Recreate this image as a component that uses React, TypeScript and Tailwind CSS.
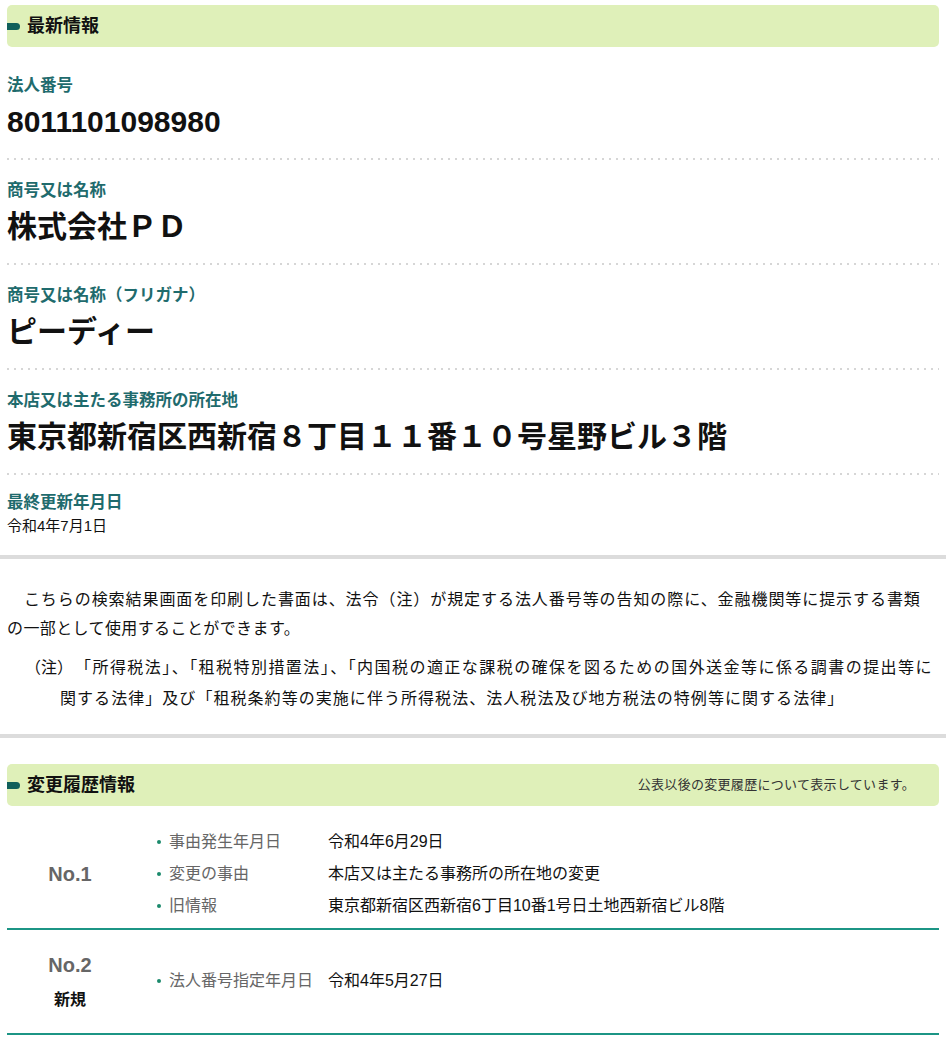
import React from "react";

const JP = "font-['Liberation_Sans','Noto_Sans_CJK_JP',sans-serif]";

function SectionHeader({ title, note }: { title: string; note?: string }) {
  return (
    <div className="flex h-[42px] items-center rounded-[5px] bg-[#dff0b9]">
      <span className="h-[7px] w-[13px] rounded-l-[2px] rounded-r-full bg-[#11605b]" />
      <h2 className="ml-[7px] text-[18px] font-bold leading-none text-[#111]">{title}</h2>
      {note && <span className="ml-auto mr-[24px] text-[13px] tracking-[0.3px] text-[#333]">{note}</span>}
    </div>
  );
}

function Dots() {
  return (
    <div className="h-[2px] bg-[linear-gradient(to_right,#d6d6d6_2px,transparent_2px)] bg-[length:7px_2px]" />
  );
}

function Item({ label, value }: { label: string; value: string }) {
  return (
    <div className="pt-[20px] pb-[14px]">
      <div className="h-[20px] text-[16.5px] font-semibold leading-[20px] text-[#1f6b6d]">{label}</div>
      <div className="mt-[5px] h-[44px] text-[30px] font-bold leading-[44px] text-[#111]">{value}</div>
    </div>
  );
}

function Bullet({ label, value }: { label: string; value: string }) {
  return (
    <li className="flex h-[32px] items-center">
      <span className="ml-[6px] mr-[8px] h-[4px] w-[4px] rounded-full bg-[#1b8a6c]" />
      <span className="w-[159px] text-[16px] text-[#666]">{label}</span>
      <span className="text-[16px] text-[#111]">{value}</span>
    </li>
  );
}

function TealLine() {
  return <div className="h-[2px] bg-[#1c9585]" />;
}

export default function App() {
  return (
    <div className={`${JP} w-[946px] bg-white pt-[5px] text-[#111]`}>
      <div className="px-[7px]">
        <SectionHeader title="最新情報" />
        <div className="mt-[8px]">
          <Item label="法人番号" value="8011101098980" />
          <Dots />
          <Item label="商号又は名称" value="株式会社ＰＤ" />
          <Dots />
          <Item label="商号又は名称（フリガナ）" value="ピーディー" />
          <Dots />
          <Item label="本店又は主たる事務所の所在地" value="東京都新宿区西新宿８丁目１１番１０号星野ビル３階" />
          <Dots />
          <div className="pt-[17px] pb-[18px]">
            <div className="h-[20px] text-[16.5px] font-semibold leading-[20px] text-[#1f6b6d]">最終更新年月日</div>
            <div className="mt-[3px] h-[22px] text-[15px] leading-[22px]">令和4年7月1日</div>
          </div>
        </div>
      </div>

      <div className="h-[4px] bg-[#dcdcdc]" />

      <div className="px-[7px] pt-[26px] pb-[20px] text-[16px]">
        <p className="leading-[29px]">
          <span className="block h-[29px] tracking-[0.93px]">
            {"\u3000"}こちらの検索結果画面を印刷した書面は、法令（注）が規定する法人番号等の告知の際に、金融機関等に提示する書類
          </span>
          <span className="block h-[29px] tracking-[0.4px]">の一部として使用することができます。</span>
        </p>
        <div className="mt-[9px] h-[62px] pl-[53px] -indent-[35px] leading-[31px]">
          <span className="inline-block w-[50px] indent-0">（注）</span>
          <span className="tracking-[1.45px]">
            「所得税法」、「租税特別措置法」、「内国税の適正な課税の確保を図るための国外送金等に係る調書の提出等に
          </span>
          <br />
          <span className="tracking-[1.05px]">
            関する法律」及び「租税条約等の実施に伴う所得税法、法人税法及び地方税法の特例等に関する法律」
          </span>
        </div>
      </div>

      <div className="h-[4px] bg-[#dcdcdc]" />

      <div className="px-[7px] pt-[26px]">
        <SectionHeader title="変更履歴情報" note="公表以後の変更履歴について表示しています。" />

        <div className="mt-[14px] flex items-center pt-[6px] pb-[6px]">
          <div className="w-[126px] text-center text-[20px] font-bold text-[#666]">No.1</div>
          <ul className="ml-[18px]">
            <Bullet label="事由発生年月日" value="令和4年6月29日" />
            <Bullet label="変更の事由" value="本店又は主たる事務所の所在地の変更" />
            <Bullet label="旧情報" value="東京都新宿区西新宿6丁目10番1号日土地西新宿ビル8階" />
          </ul>
        </div>
        <TealLine />

        <div className="flex items-center pt-[20px] pb-[21px]">
          <div className="flex w-[126px] flex-col items-center">
            <div className="text-[20px] font-bold leading-[30px] text-[#666]">No.2</div>
            <div className="mt-[8px] text-[16px] font-bold leading-[24px] text-[#111]">新規</div>
          </div>
          <ul className="ml-[18px]">
            <Bullet label="法人番号指定年月日" value="令和4年5月27日" />
          </ul>
        </div>
        <TealLine />
      </div>
    </div>
  );
}
